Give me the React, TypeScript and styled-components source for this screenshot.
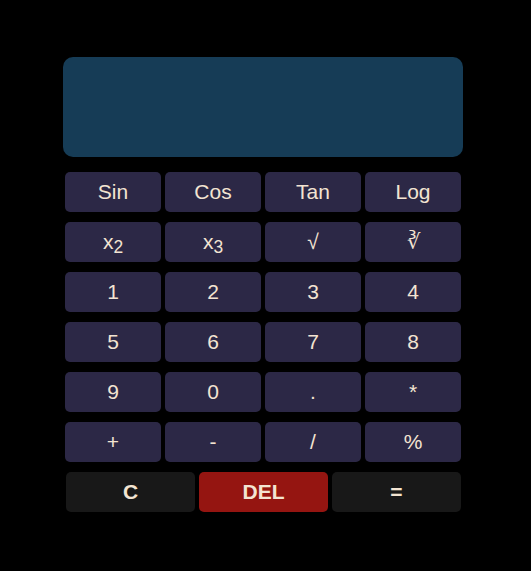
import React from "react"
import styled, { createGlobalStyle } from "styled-components"

const GlobalStyle = createGlobalStyle`
  body {
    margin: 0;
    background: #000;
    font-family: "Liberation Sans", Arial, sans-serif;
  }
`

const Page = styled.main`
  display: flex;
  min-height: 571px;
  padding: 57px 0 0 63px;
  box-sizing: border-box;
  background: #000;
`

const Calculator = styled.div`
  display: flex;
  flex-direction: column;
  width: 400px;
`

const Display = styled.div`
  height: 100px;
  margin-bottom: 10px;
  border-radius: 10px;
  background-color: #163c56;
`

const Row = styled.div<{ $inset?: boolean }>`
  display: flex;
  padding-left: ${p => (p.$inset ? "1px" : "0")};
`

const Key = styled.button<{ $variant?: "plain" | "clear" | "danger" }>`
  flex: 1;
  height: 40px;
  margin: 5px 2px;
  border: none;
  border-radius: 5px;
  padding: 0;
  font-family: "Liberation Sans", Arial, sans-serif;
  font-size: 21px;
  font-weight: ${p => (p.$variant && p.$variant !== "plain" ? 700 : 400)};
  color: #f3e4d2;
  background-color: ${p =>
    p.$variant === "danger" ? "#951511" : p.$variant === "clear" ? "#181818" : "#2c2846"};
  cursor: pointer;

  sub {
    font-size: 0.83em;
    vertical-align: -0.25em;
    line-height: 0;
  }
`

const rows: React.ReactNode[][] = [
  ["Sin", "Cos", "Tan", "Log"],
  [
    <>x<sub>2</sub></>,
    <>x<sub>3</sub></>,
    "√",
    "∛",
  ],
  ["1", "2", "3", "4"],
  ["5", "6", "7", "8"],
  ["9", "0", ".", "*"],
  ["+", "-", "/", "%"],
]

export default function App() {
  return (
    <Page>
      <GlobalStyle />
      <Calculator>
        <Display />
        {rows.map((row, i) => (
          <Row key={i}>
            {row.map((label, j) => (
              <Key key={j}>{label}</Key>
            ))}
          </Row>
        ))}
        <Row $inset>
          <Key $variant="clear">C</Key>
          <Key $variant="danger">DEL</Key>
          <Key $variant="clear">=</Key>
        </Row>
      </Calculator>
    </Page>
  )
}
